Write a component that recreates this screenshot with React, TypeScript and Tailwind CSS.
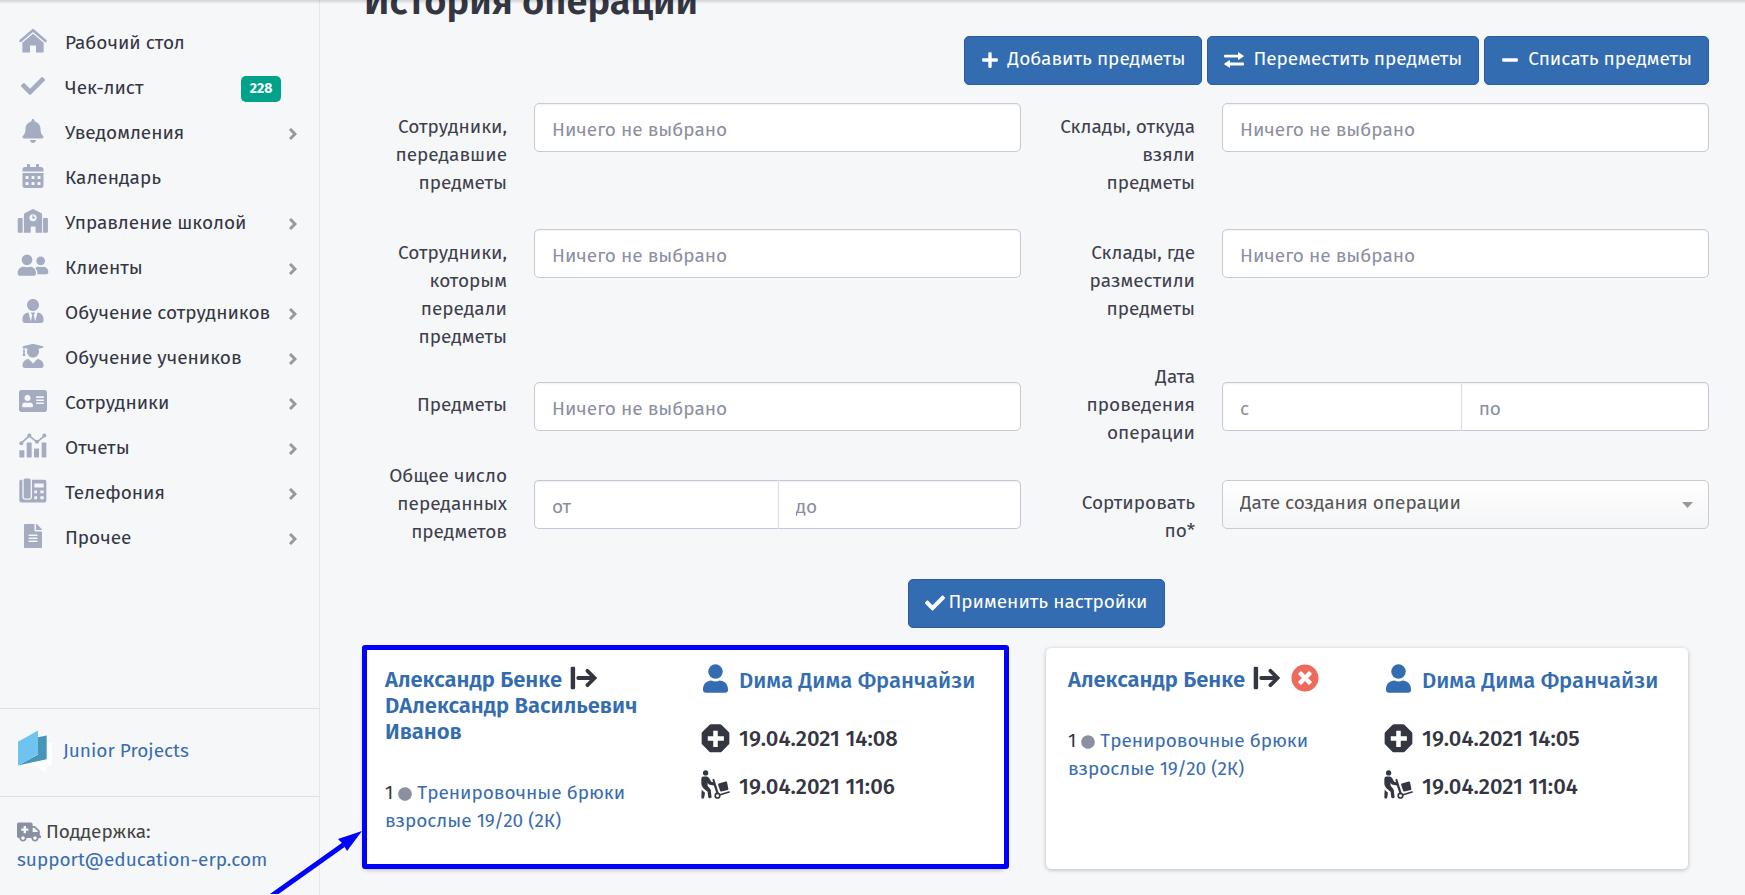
import React from "react";
import {
  FaAddressCard,
  FaAmbulance,
  FaBell,
  FaCalendarAlt,
  FaCheck,
  FaCircle,
  FaFileAlt,
  FaMinus,
  FaPlus,
  FaTimesCircle,
  FaUserGraduate,
  FaUserTie,
} from "react-icons/fa";

function HomeIcon() {
  return (
    <svg viewBox="56 83 84 74" className="h-[25px] w-7" fill="currentColor" aria-hidden="true">
      <path d="M61 121 98 89 135 121" fill="none" stroke="currentColor" strokeWidth="8" strokeLinecap="round" strokeLinejoin="round" />
      <path d="M66 127 98 100 130 127V154q0 2-2 2H107V137q0-2-2-2H91q-2 0-2 2V156H68q-2 0-2-2Z" />
    </svg>
  );
}

function SchoolIcon() {
  return (
    <svg viewBox="50 626 96 74" className="h-6 w-8" fill="currentColor" aria-hidden="true">
      <path d="M54 654H66V699H54q-3 0-3-3V657q0-3 3-3ZM129 654h12q3 0 3 3v39q0 3-3 3H129Z" />
      <path d="M70 642q0-2 2-3L96 627q2-1 4 0l24 12q2 1 2 3V699H106V682q0-2-2-2H93q-2 0-2 2V699H70Z" />
      <circle cx="98" cy="653" r="11" fill="#f5f7f9" />
      <path d="M98 645v8h6" fill="none" stroke="currentColor" strokeWidth="4" />
    </svg>
  );
}

function ClientsIcon() {
  return (
    <svg viewBox="50 765 96 68" className="h-[23px] w-8" fill="currentColor" aria-hidden="true">
      <circle cx="80" cy="782" r="16" />
      <circle cx="121" cy="785" r="13" />
      <path d="M52 822c0-11 8-19 18-19 6 2 13 2 19 0 10 0 18 8 18 19 0 5-3 8-8 8H60c-5 0-8-3-8-8Z" />
      <path d="M105 807c2-2 5-4 9-4 5 1 10 1 15 0 8 0 15 7 15 16 0 3-2 6-6 6H111c1-7-1-13-6-18Z" />
    </svg>
  );
}

function ReportsIcon() {
  return (
    <svg viewBox="56 434 84 74" className="h-[25px] w-7" fill="currentColor" aria-hidden="true">
      <rect x="57" y="485" width="15" height="22" rx="2" />
      <rect x="79" y="462" width="15" height="45" rx="2" />
      <rect x="101" y="480" width="15" height="27" rx="2" />
      <rect x="124" y="462" width="14" height="45" rx="2" />
      <path d="M63 464 87 442 110 461 132 442" fill="none" stroke="currentColor" strokeWidth="5" />
      <circle cx="63" cy="464" r="6" />
      <circle cx="87" cy="441" r="6" />
      <circle cx="110" cy="460" r="6" />
      <circle cx="132" cy="441" r="6" />
    </svg>
  );
}

function PhoneIcon() {
  return (
    <svg viewBox="56 569 84 74" className="h-[25px] w-7" fill="currentColor" aria-hidden="true">
      <path
        fillRule="evenodd"
        d="M62 574H66V624q0 10 10 10H86q9 0 9-10V574H132q6 0 6 6V636q0 6-6 6H63q-6 0-6-6V580q0-6 5-6ZM102 585V597H130V585ZM102 606V614H110V606ZM120 606V614H130V606ZM102 623V632H110V623ZM120 623V632H130V623Z"
      />
      <rect x="70" y="570" width="21" height="60" rx="5" />
    </svg>
  );
}

function ChevronIcon() {
  return (
    <svg viewBox="0 0 8 12" className="h-3 w-2 text-[#999]" fill="none" stroke="currentColor" strokeWidth="3" aria-hidden="true">
      <path d="M1 1 6 6 1 11" />
    </svg>
  );
}

function ExchangeIcon() {
  return (
    <svg viewBox="0 0 20 16" className="h-4 w-5" fill="currentColor" aria-hidden="true">
      <path d="M1 2.7H14V.8q0-.8.8-.4L19.600 3.700q.5.400 0 .8L14.800 7.700q-.8.400-.8-.4V5.500H1q-1 0-1-.9V3.600q0-.9 1-.9Z" />
      <path d="M19 10.600H6V8.700q0-.8-.8-.4L.4 11.600q-.5.400 0 .8l4.800 3.200q.8.400.8-.4V13.400H19q1 0 1-.9v-1q0-.9-1-.9Z" />
    </svg>
  );
}

function TransferIcon() {
  return (
    <svg viewBox="655 115 82 70" className="h-6 w-7" fill="currentColor" aria-hidden="true">
      <rect x="657" y="117" width="13" height="66" rx="4" />
      <path d="M679 150H727M706 129 727 150 706 171" fill="none" stroke="currentColor" strokeWidth="11" strokeLinecap="round" />
    </svg>
  );
}

function PersonIcon() {
  return (
    <svg viewBox="32 106 88 88" className="size-[29px]" fill="currentColor" aria-hidden="true">
      <circle cx="76" cy="129" r="22" />
      <path d="M38 183c0-16 11-27 26-27 8 4 16 4 24 0 15 0 26 11 26 27q0 10-9 10H47q-9 0-9-10Z" />
    </svg>
  );
}

function OctagonPlusIcon() {
  return (
    <svg viewBox="32 282 88 90" className="size-[29px]" aria-hidden="true">
      <path d="M62 283H90q3 0 5 2L117 307q2 2 2 5V341q0 3-2 5L95 368q-2 2-5 2H62q-3 0-5-2L35 346q-2-2-2-5V312q0-3 2-5L57 285q2-2 5-2Z" fill="currentColor" />
      <path d="M69 303H83V320H102V334H83V353H69V334H52V320H69Z" fill="#fff" />
    </svg>
  );
}

function DollyIcon() {
  return (
    <svg viewBox="32 424 88 88" className="size-[29px]" fill="currentColor" aria-hidden="true">
      <circle cx="46" cy="433" r="8" />
      <path d="M40 444h9q5 0 8 5l6 11 6 1-2-5q-1-4 2-5t4 3l13 41-6 3-9-27-12-2q-3 0-5-3l-2-4v10l8 10q2 2 2 6l2 18q0 4-5 4t-5-4l-2-16L40 480q-7-6-7-14V451q0-7 7-7Z" />
      <path d="M34 484 44 493 42 507q-1 4-5 4-4 0-4-5Z" />
      <path d="M86 465 107 459q3-1 4 2l4 20q1 3-2 4L94 489q-3 1-4-2L84 469q-1-3 2-4Z" />
      <path d="M90 499 117 491" fill="none" stroke="currentColor" strokeWidth="5" strokeLinecap="round" />
      <circle cx="82" cy="502" r="7" fill="none" stroke="currentColor" strokeWidth="5" />
    </svg>
  );
}

function BookLogo() {
  return (
    <svg viewBox="54 122 102 128" className="h-[43px] w-[34px]" aria-hidden="true">
      <path d="M140 158H155V228H138V249L106 229H54L140 209Z" fill="#fff" />
      <path d="M114 143 140 138V209L54 228 114 195Z" fill="#4696b8" />
      <path d="M54 157 114 123V194L54 228Z" fill="#6fc3ee" />
    </svg>
  );
}

const navItems: { label: string; icon: React.ReactNode; arrow?: boolean; badge?: string }[] = [
  { label: "Рабочий стол", icon: <HomeIcon /> },
  { label: "Чек-лист", icon: <FaCheck />, badge: "228" },
  { label: "Уведомления", icon: <FaBell />, arrow: true },
  { label: "Календарь", icon: <FaCalendarAlt /> },
  { label: "Управление школой", icon: <SchoolIcon />, arrow: true },
  { label: "Клиенты", icon: <ClientsIcon />, arrow: true },
  { label: "Обучение сотрудников", icon: <FaUserTie />, arrow: true },
  { label: "Обучение учеников", icon: <FaUserGraduate />, arrow: true },
  { label: "Сотрудники", icon: <FaAddressCard className="size-7" />, arrow: true },
  { label: "Отчеты", icon: <ReportsIcon />, arrow: true },
  { label: "Телефония", icon: <PhoneIcon />, arrow: true },
  { label: "Прочее", icon: <FaFileAlt />, arrow: true },
];

function Sidebar() {
  return (
    <aside className="flex w-80 shrink-0 flex-col border-r border-[#e4e6ea] pt-[21px]">
      <nav className="flex-1">
        <ul>
          {navItems.map((item) => (
            <li key={item.label}>
              <a href="#" className="flex h-[45px] items-center pr-[22px] pl-4 whitespace-nowrap text-[#343642]">
                <span className="mr-4 flex w-[33px] shrink-0 justify-center pb-[6px] text-2xl text-[#a5abc0]">{item.icon}</span>
                <span className="flex-1">{item.label}</span>
                {item.badge && (
                  <span className="mr-4 flex h-[26px] w-10 items-center justify-center rounded-[5px] bg-[#00a28a] text-sm font-bold text-white">
                    {item.badge}
                  </span>
                )}
                {item.arrow && <ChevronIcon />}
              </a>
            </li>
          ))}
        </ul>
      </nav>
      <div className="flex h-[88px] items-center gap-[11px] border-t border-[#dcdfe3] pb-[2px] pl-[18px]">
        <BookLogo />
        <a href="#" className="text-[#3a6cb0]">Junior Projects</a>
      </div>
      <div className="h-[99px] border-t border-[#dcdfe3] px-[17px] pt-[21px] leading-7">
        <div className="flex items-center gap-[5px] text-[#444]">
          <FaAmbulance className="size-6 text-[#8b8fa1]" />
          Поддержка:
        </div>
        <a href="mailto:support@education-erp.com" className="text-[#3a6cb0]">support@education-erp.com</a>
      </div>
    </aside>
  );
}

const buttonClass =
  "flex h-[49px] items-center rounded-[5px] border border-[#2b5c9b] bg-[#336cb0] px-4 pb-[2px] whitespace-nowrap text-white";

const inputClass = "h-[49px] min-w-0 border bg-white px-[17px] pt-1 shadow-[inset_0_1px_2px_rgba(0,0,0,0.06)] outline-none placeholder:text-[#8b8fa1]";

function Field({ id, label, top, children }: { id: string; label: string; top: string; children: React.ReactNode }) {
  return (
    <div className="flex">
      <label htmlFor={id} className={`w-[171px] shrink-0 pr-3 pl-5 text-right leading-7 text-[#3e404c] ${top}`}>
        {label}
      </label>
      <div className="flex flex-1 px-[15px]">{children}</div>
    </div>
  );
}

function Picker({ id }: { id: string }) {
  return <input id={id} placeholder="Ничего не выбрано" className={`${inputClass} w-full rounded-[5px] border-[#c9cbcf]`} />;
}

function Range({ id, from, to, split }: { id: string; from: string; to: string; split: string }) {
  return (
    <>
      <input id={id} placeholder={from} className={`${inputClass} ${split} rounded-l-[5px] border-r-0 border-[#c4c7d6]`} />
      <input aria-label={to} placeholder={to} className={`${inputClass} flex-1 rounded-r-[5px] border-[#c4c7d6] border-l-[#dfe0e6]`} />
    </>
  );
}

function Filters() {
  return (
    <form className="mt-[18px]">
      <div className="grid min-h-[126px] grid-cols-2 items-start">
        <Field id="from-staff" label="Сотрудники, передавшие предметы" top="pt-[10px]"><Picker id="from-staff" /></Field>
        <Field id="from-store" label="Склады, откуда взяли предметы" top="pt-[10px]"><Picker id="from-store" /></Field>
      </div>
      <div className="grid min-h-[126px] grid-cols-2 items-start">
        <Field id="to-staff" label="Сотрудники, которым передали предметы" top="pt-[10px]"><Picker id="to-staff" /></Field>
        <Field id="to-store" label="Склады, где разместили предметы" top="pt-[10px]"><Picker id="to-store" /></Field>
      </div>
      <div className="grid min-h-[102px] grid-cols-2 items-center *:items-center">
        <Field id="items" label="Предметы" top="pb-[2px]"><Picker id="items" /></Field>
        <Field id="date-from" label="Дата проведения операции" top="pb-[2px]"><Range id="date-from" from="с" to="по" split="w-[49%]" /></Field>
      </div>
      <div className="grid min-h-[94px] grid-cols-2 *:items-center">
        <Field id="count-from" label="Общее число переданных предметов" top="pt-0"><Range id="count-from" from="от" to="до" split="w-1/2" /></Field>
        <Field id="sort" label="Сортировать по*" top="self-start pt-8">
          <div className="relative w-full">
            <select id="sort" className="h-[49px] w-full appearance-none rounded-[5px] border border-[#c9cbcf] bg-linear-to-b from-white to-[#f4f5f7] px-[17px] pb-px text-[#555]">
              <option>Дате создания операции</option>
            </select>
            <svg viewBox="0 0 11 6" className="pointer-events-none absolute top-[22px] right-4 h-[6px] w-[11px]" aria-hidden="true">
              <path d="M0 0H11L5.500 6Z" fill="#999" />
            </svg>
          </div>
        </Field>
      </div>
      <div className="mt-7 flex justify-center">
        <button type="button" className={`${buttonClass} gap-1`}>
          <FaCheck className="size-5" />
          Применить настройки
        </button>
      </div>
    </form>
  );
}

type Operation = { receiver?: string; created: string; moved: string; highlighted?: boolean };

const operations: Operation[] = [
  { receiver: "DАлександр Васильевич Иванов", created: "19.04.2021 14:08", moved: "19.04.2021 11:06", highlighted: true },
  { created: "19.04.2021 14:05", moved: "19.04.2021 11:04" },
];

function OperationCard({ op }: { op: Operation }) {
  return (
    <article className="relative grid h-[221px] grid-cols-2 rounded-[5px] bg-white shadow-[0_1px_4px_rgba(0,0,0,0.25)]">
      <div className="pt-[19px] pr-3 pl-[22px]">
        <h2 className="text-[22px] leading-[26px] font-semibold text-[#336cb0]">
          <span className="flex items-center gap-2 whitespace-nowrap">
            <a href="#">Александр Бенке</a>
            <span className="flex h-[26px] items-center gap-[10px] pb-1 text-[#343642]">
              <TransferIcon />
              {!op.receiver && <FaTimesCircle className="size-7 text-[#ee6a5c]" />}
            </span>
          </span>
          {op.receiver && <a href="#">{op.receiver}</a>}
        </h2>
        <p className="mt-[34px] leading-7 text-[#343642]">
          1 <FaCircle className="inline size-[14px] align-[-2px] text-[#8b8fa1]" />{" "}
          <a href="#" className="text-[#3a6cb0]">Тренировочные брюки взрослые 19/20 (2К)</a>
        </p>
      </div>
      <div className="flex flex-col pt-[17px] pl-[17px] text-[22px] font-medium whitespace-nowrap text-[#343642]">
        <a href="#" className="flex h-[30px] items-center gap-[9px] text-[#336cb0]">
          <span className="pb-1"><PersonIcon /></span>
          Dима Дима Франчайзи
        </a>
        <div className="mt-7 flex h-[30px] items-center gap-[9px]">
          <OctagonPlusIcon />
          {op.created}
        </div>
        <div className="mt-[18px] flex h-[30px] items-center gap-[9px]">
          <span className="pb-1"><DollyIcon /></span>
          {op.moved}
        </div>
      </div>
      {op.highlighted && (
        <>
          <div className="pointer-events-none absolute -top-[3px] -right-1 bottom-0 -left-px rounded-[3px] border-5 border-[#00f]" />
          <svg viewBox="0 0 101 70" className="pointer-events-none absolute top-[176px] -left-[101px] h-[70px] w-[101px]" aria-hidden="true">
            <path d="M8 73 84 19" stroke="#00f" strokeWidth="5" />
            <path d="M100 7 76 15 81 20 85 27Z" fill="#00f" />
          </svg>
        </>
      )}
    </article>
  );
}

export default function App() {
  return (
    <div className="relative flex min-h-screen overflow-hidden bg-[#f5f7f9] font-['Fira_Sans','Noto_Sans',sans-serif] text-[19px]">
      <div className="absolute inset-x-0 top-0 z-10 h-1 bg-linear-to-b from-black/15 to-transparent" />
      <Sidebar />
      <main className="min-w-0 flex-1 pr-[21px] pl-7">
        <h1 className="-mt-[19px] ml-4 text-[38px] leading-10 font-semibold text-[#343642]">История операций</h1>
        <div className="mt-[15px] mr-[15px] flex justify-end gap-[5px]">
          <button type="button" className={`${buttonClass} gap-[9px]`}>
            <FaPlus className="size-[18px]" />
            Добавить предметы
          </button>
          <button type="button" className={`${buttonClass} gap-[9px]`}>
            <ExchangeIcon />
            Переместить предметы
          </button>
          <button type="button" className={`${buttonClass} gap-[9px]`}>
            <FaMinus className="size-[18px]" />
            Списать предметы
          </button>
        </div>
        <Filters />
        <section className="mt-5 mr-9 ml-[15px] grid grid-cols-2 gap-[41px]">
          {operations.map((op) => (
            <OperationCard key={op.created} op={op} />
          ))}
        </section>
      </main>
    </div>
  );
}
